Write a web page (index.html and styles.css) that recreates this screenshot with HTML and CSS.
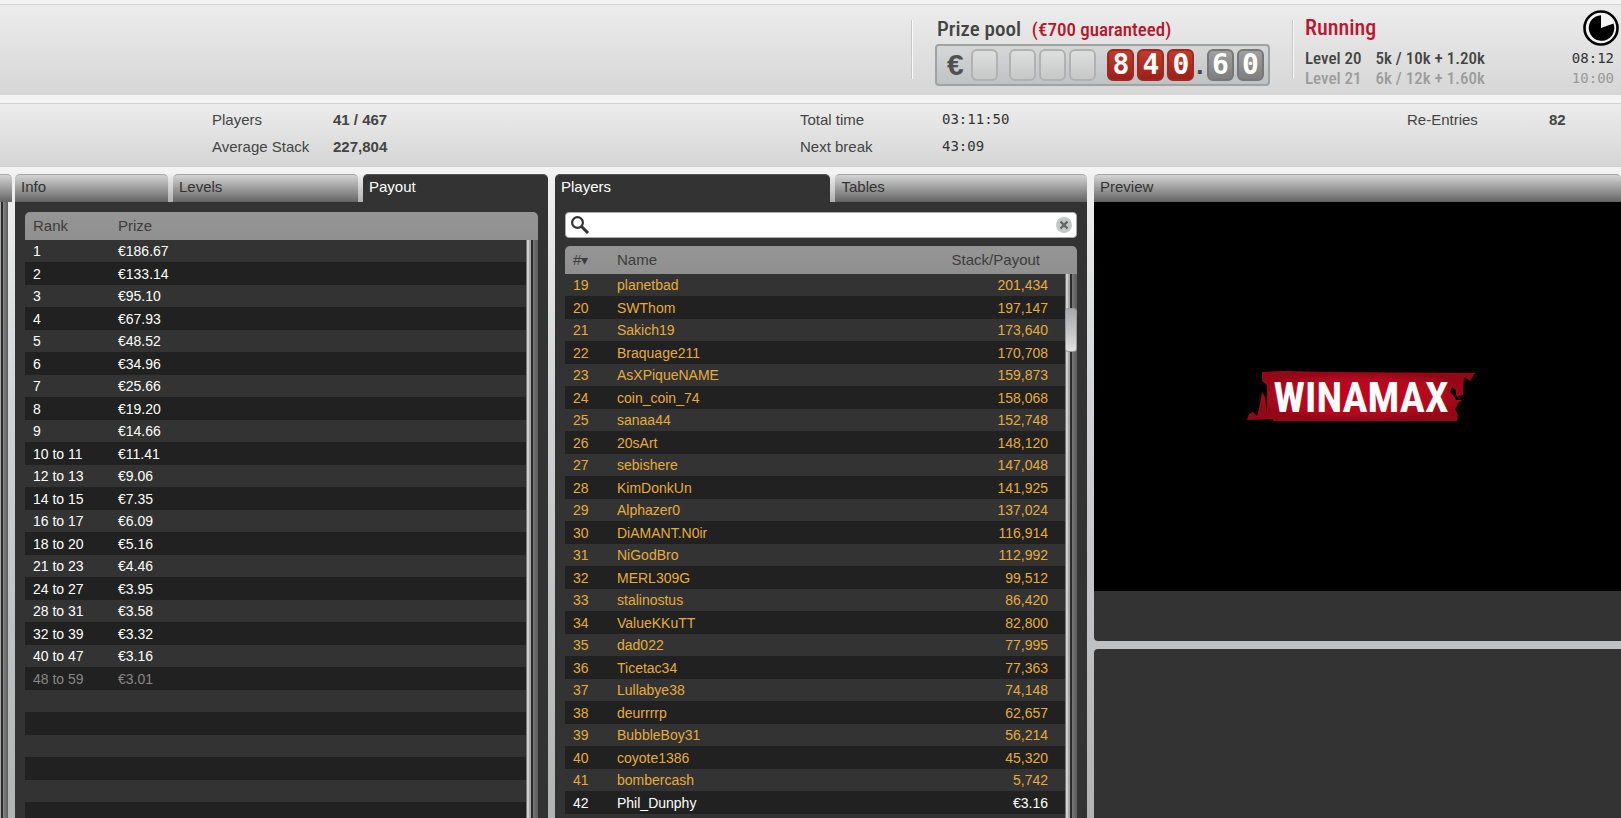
FILE: index.html
```
<!DOCTYPE html>
<html lang="en">
<head>
<meta charset="utf-8">
<title>Tournament lobby</title>
<link rel="stylesheet" href="styles.css">
</head>
<body>
<header class="top">
  <div class="top-space"></div>
  <section class="pool">
    <h1 class="pool-title">Prize pool <span class="guarantee">(€700 guaranteed)</span></h1>
    <div class="counter">
      <span class="currency">€</span>
      <span class="cells"><i class="cell"></i></span>
      <span class="cells"><i class="cell"></i><i class="cell"></i><i class="cell"></i></span>
      <span class="cells"><b class="cell red">8</b><b class="cell red">4</b><b class="cell red">0</b></span>
      <span class="dot">.</span>
      <span class="cells"><b class="cell gray">6</b><b class="cell gray">0</b></span>
    </div>
  </section>
  <section class="status">
    <div class="levels">
      <h2 class="running">Running</h2>
      <p class="level"><span>Level 20</span><span>5k / 10k + 1.20k</span></p>
      <p class="level next"><span>Level 21</span><span>6k / 12k + 1.60k</span></p>
    </div>
    <div class="clock">
      <svg class="clock-icon" viewBox="0 0 36 36" aria-hidden="true">
        <circle cx="18" cy="18" r="16.5" fill="#f4f4f4" stroke="#000" stroke-width="2.6"/>
        <path d="M18 18V5.200A12.800 12.800 0 1 0 30.500 13.500Z" fill="#000"/>
      </svg>
      <time class="lcd">08:12</time>
      <time class="lcd faded">10:00</time>
    </div>
  </section>
</header>
<section class="stats">
  <dl class="stat-group wide">
    <dt>Players</dt><dd>41 / 467</dd>
    <dt>Average Stack</dt><dd>227,804</dd>
  </dl>
  <dl class="stat-group mid">
    <dt>Total time</dt><dd class="lcd">03:11:50</dd>
    <dt>Next break</dt><dd class="lcd">43:09</dd>
  </dl>
  <dl class="stat-group mid">
    <dt>Re-Entries</dt><dd>82</dd>
  </dl>
</section>
<main class="panels">
  <aside class="edge"><div class="tab"></div><div class="edge-body"><div class="scroll"></div></div></aside>

  <section class="panel">
    <nav class="tabs info-tabs">
      <button class="tab">Info</button><button class="tab">Levels</button><button class="tab active">Payout</button>
    </nav>
    <div class="content">
      <div class="list">
        <table class="grid payout">
          <thead><tr><th class="c-rank">Rank</th><th>Prize</th></tr></thead>
          <tbody>
            <tr><td>1</td><td>€186.67</td></tr>
            <tr><td>2</td><td>€133.14</td></tr>
            <tr><td>3</td><td>€95.10</td></tr>
            <tr><td>4</td><td>€67.93</td></tr>
            <tr><td>5</td><td>€48.52</td></tr>
            <tr><td>6</td><td>€34.96</td></tr>
            <tr><td>7</td><td>€25.66</td></tr>
            <tr><td>8</td><td>€19.20</td></tr>
            <tr><td>9</td><td>€14.66</td></tr>
            <tr><td>10 to 11</td><td>€11.41</td></tr>
            <tr><td>12 to 13</td><td>€9.06</td></tr>
            <tr><td>14 to 15</td><td>€7.35</td></tr>
            <tr><td>16 to 17</td><td>€6.09</td></tr>
            <tr><td>18 to 20</td><td>€5.16</td></tr>
            <tr><td>21 to 23</td><td>€4.46</td></tr>
            <tr><td>24 to 27</td><td>€3.95</td></tr>
            <tr><td>28 to 31</td><td>€3.58</td></tr>
            <tr><td>32 to 39</td><td>€3.32</td></tr>
            <tr><td>40 to 47</td><td>€3.16</td></tr>
            <tr class="paid"><td>48 to 59</td><td>€3.01</td></tr>
            <tr><td></td><td></td></tr>
            <tr><td></td><td></td></tr>
            <tr><td></td><td></td></tr>
            <tr><td></td><td></td></tr>
            <tr><td></td><td></td></tr>
            <tr><td></td><td></td></tr>
          </tbody>
        </table>
        <div class="scroll"></div>
      </div>
    </div>
  </section>

  <section class="panel">
    <nav class="tabs player-tabs">
      <button class="tab active">Players</button><button class="tab">Tables</button>
    </nav>
    <div class="content">
      <div class="search">
        <svg class="glass" viewBox="0 0 20 20" aria-hidden="true"><circle cx="7.500" cy="7.500" r="5.400" fill="none" stroke="#333" stroke-width="2.200"/><path d="M11.500 11.500L18 18" stroke="#333" stroke-width="3"/></svg>
        <input class="search-box" type="text" aria-label="Search players">
        <button class="clear" aria-label="Clear"><svg viewBox="0 0 16 16"><circle cx="8" cy="8" r="8" fill="#c6c8c8"/><path d="M4.500 4.500L11.500 11.500M11.500 4.500L4.500 11.500" stroke="#666" stroke-width="2.400"/></svg></button>
      </div>
      <div class="list">
        <table class="grid players">
          <thead><tr><th class="c-num">#<span class="sort">▾</span></th><th>Name</th><th class="c-stack">Stack/Payout</th></tr></thead>
          <tbody>
            <tr><td>19</td><td>planetbad</td><td>201,434</td></tr>
            <tr><td>20</td><td>SWThom</td><td>197,147</td></tr>
            <tr><td>21</td><td>Sakich19</td><td>173,640</td></tr>
            <tr><td>22</td><td>Braquage211</td><td>170,708</td></tr>
            <tr><td>23</td><td>AsXPiqueNAME</td><td>159,873</td></tr>
            <tr><td>24</td><td>coin_coin_74</td><td>158,068</td></tr>
            <tr><td>25</td><td>sanaa44</td><td>152,748</td></tr>
            <tr><td>26</td><td>20sArt</td><td>148,120</td></tr>
            <tr><td>27</td><td>sebishere</td><td>147,048</td></tr>
            <tr><td>28</td><td>KimDonkUn</td><td>141,925</td></tr>
            <tr><td>29</td><td>Alphazer0</td><td>137,024</td></tr>
            <tr><td>30</td><td>DiAMANT.N0ir</td><td>116,914</td></tr>
            <tr><td>31</td><td>NiGodBro</td><td>112,992</td></tr>
            <tr><td>32</td><td>MERL309G</td><td>99,512</td></tr>
            <tr><td>33</td><td>stalinostus</td><td>86,420</td></tr>
            <tr><td>34</td><td>ValueKKuTT</td><td>82,800</td></tr>
            <tr><td>35</td><td>dad022</td><td>77,995</td></tr>
            <tr><td>36</td><td>Ticetac34</td><td>77,363</td></tr>
            <tr><td>37</td><td>Lullabye38</td><td>74,148</td></tr>
            <tr><td>38</td><td>deurrrrp</td><td>62,657</td></tr>
            <tr><td>39</td><td>BubbleBoy31</td><td>56,214</td></tr>
            <tr><td>40</td><td>coyote1386</td><td>45,320</td></tr>
            <tr><td>41</td><td>bombercash</td><td>5,742</td></tr>
            <tr class="out"><td>42</td><td>Phil_Dunphy</td><td>€3.16</td></tr>
            <tr><td></td><td></td><td></td></tr>
          </tbody>
        </table>
        <div class="scroll"><div class="thumb"></div></div>
      </div>
    </div>
  </section>

  <section class="side">
    <div class="preview panel">
      <div class="tabs"><button class="tab">Preview</button></div>
      <div class="screen">
        <svg class="logo" viewBox="0 0 230 52" role="img" aria-label="Winamax">
          <defs><radialGradient id="red"><stop offset="0" stop-color="#c8001e"/><stop offset=".7" stop-color="#b00a1e"/><stop offset="1" stop-color="#930716"/></radialGradient></defs>
          <path d="M15 1L36 0 85 1 228 2 223 10 217 6 216 24 211 25 215 30 212 31 208 38 211 44 210 50H27L25 48 0 49 2 43 6 41 10 45 12 38 15 21 18 26 20 43 20 14 15 10Z" fill="url(#red)"/>
          <path d="M205 16L209 19 209 24 214 29 209 29 206 24 203 21Z" fill="#000"/>
          <text class="logo-text" x="114" y="41" text-anchor="middle">WINAMAX</text>
        </svg>
      </div>
      <div class="under"></div>
    </div>
    <div class="blank"></div>
  </section>
</main>
</body>
</html>
```
FILE: styles.css
```
* { box-sizing: border-box; }

body {
  margin: 0;
  height: 100vh;
  overflow: hidden;
  display: flex;
  flex-direction: column;
  padding-top: 4px;
  background: #f3f3f3;
  color: #444;
  font-family: "Liberation Sans", Arial, sans-serif;
  font-size: 15px;
}

h1, h2, p, dl, dd { margin: 0; font-weight: normal; }
button { font: inherit; border: 0; cursor: pointer; }

.top, .stats {
  background: linear-gradient(#ececec, #d6d6d6);
  border-top: 1px solid #d2d2d2;
}

.top {
  display: flex;
  height: 91px;
  margin-bottom: 8px;
  font-family: "Roboto Condensed", "Liberation Sans Narrow", "Liberation Sans", sans-serif;
}
.top-space { flex: 911 1 0; }

.pool, .status {
  position: relative;
  padding-left: 24px;
}
.pool::before, .status::before {
  content: "";
  position: absolute;
  left: 0;
  top: 15px;
  width: 2px;
  height: 59px;
  background: linear-gradient(90deg, #c6c6c6 50%, #fafafa 50%);
}
.pool { width: 381px; padding-top: 10px; }
.status {
  flex: 314 1 0;
  display: flex;
  justify-content: space-between;
  padding: 5px 2px 0 13px;
}

.pool-title {
  font-size: 21px;
  font-weight: 500;
  line-height: 28px;
  padding-left: 2px;
  white-space: nowrap;
}
.guarantee { color: #b9142a; font-size: 19px; margin-left: 6px; }

.counter {
  width: 335px;
  height: 42px;
  display: flex;
  align-items: center;
  padding: 0 4px 0 10px;
  border: 2px solid #a0a3a4;
  border-radius: 4px;
  background: linear-gradient(#d6d8d8, #bfc2c3);
}
.currency { width: 25px; font: bold 30px/32px "Liberation Sans", sans-serif; color: #505050; }
.cells { display: flex; gap: 3px; margin-right: 11px; }
.cells:last-child { margin-right: 0; }
.cell {
  width: 27px;
  height: 32px;
  border: 2px solid #b0b2b2;
  border-radius: 6px;
  background: linear-gradient(#dedede, #c6c8c8);
  color: #fff;
  font: bold 28px/28px "DejaVu Sans Mono", monospace;
  display: flex;
  justify-content: center;
}
.red { background: linear-gradient(#c23a2a, #9c2019); border-color: #9d2a20; }
.gray { background: linear-gradient(#a0a0a0, #7e7e7e); border-color: #777; }
.dot { width: 11px; margin-left: -9px; font: bold 26px/32px "Liberation Sans", sans-serif; }

.running {
  color: #bf1530;
  font-size: 22px;
  font-weight: 500;
  line-height: 36px;
  padding-bottom: 2px;
}
.level {
  display: flex;
  gap: 14px;
  font-size: 17px;
  font-weight: 500;
  line-height: 20px;
  white-space: nowrap;
}
.next { color: #9c9c9c; }

.lcd { font: 14px/20px "DejaVu Sans Mono", monospace; color: #333; }
.faded { color: #999; }
.clock {
  display: flex;
  flex-direction: column;
  align-items: flex-end;
}
.clock-icon { width: 36px; height: 36px; margin-bottom: 2px; }
.clock .lcd { padding-right: 5px; }

.stats {
  height: 64px;
  margin-bottom: 7px;
  padding: 2px 0 0 212px;
  display: grid;
  grid-template-columns: 588fr 607fr 214fr;
  border-bottom: 1px solid #cfcfcf;
}
.stat-group {
  display: grid;
  grid-template-columns: 121px 1fr;
  grid-auto-rows: 27px;
  line-height: 27px;
}
.mid { grid-template-columns: 142px 1fr; }
.stat-group dd { font-weight: bold; }
.stat-group .lcd { font-weight: normal; line-height: 27px; }

.panels {
  flex: 1;
  min-height: 0;
  display: grid;
  grid-template-columns: 8px 533fr 532fr 527fr;
  grid-template-rows: minmax(0, 1fr);
  gap: 7px;
  background: linear-gradient(#f0f0f0, #d2d3d4 35%, #b2b3b3);
}

.panel, .edge {
  display: flex;
  flex-direction: column;
  min-height: 0;
  min-width: 0;
}
.edge-body {
  flex: 1;
  display: flex;
}
.edge-body .scroll { width: 8px; }

.tabs {
  display: grid;
  gap: 5px;
  height: 28px;
  background: linear-gradient(#f0f0f0, #b0b0b0);
  border-radius: 5px 5px 0 0;
}
.info-tabs { grid-template-columns: 153fr 185fr 185fr; }
.player-tabs { grid-template-columns: 276fr 252fr; }
.tab {
  height: 28px;
  padding: 0 6px 5px;
  text-align: left;
  color: #333;
  background: linear-gradient(#d4d4d4, #646464);
  border-radius: 5px 5px 0 0;
  border-top: 1px solid #a6a6a6;
}
.tabs .active {
  background: #333;
  color: #fff;
  border-top-color: #555;
}
.edge .tab { border-radius: 0 5px 0 0; }

.content {
  flex: 1;
  min-height: 0;
  background: #333;
  padding: 10px 10px 0;
  display: flex;
  flex-direction: column;
  gap: 8px;
}

.search {
  display: flex;
  align-items: center;
  height: 26px;
  padding: 0 4px;
  background: #fff;
  border: 1px solid #aaa;
  border-radius: 4px;
}
.glass { width: 20px; height: 20px; }
.search-box {
  flex: 1;
  min-width: 0;
  border: 0;
  outline: 0;
  background: transparent;
  font: inherit;
}
.clear { width: 16px; height: 16px; padding: 0; background: none; }
.clear svg { display: block; }

.list {
  flex: 1;
  min-height: 0;
  overflow: hidden;
  display: grid;
  grid-template-columns: minmax(0, 1fr) 12px;
  background: linear-gradient(#959595, #909090) top / 100% 28px no-repeat;
  border-radius: 5px 5px 0 0;
}
.grid {
  width: 100%;
  align-self: start;
  border-collapse: collapse;
  table-layout: fixed;
}
.grid th {
  height: 28px;
  padding: 0 0 2px 8px;
  font-weight: normal;
  color: #3c3c3c;
  text-align: left;
}
.grid td {
  height: 22px;
  padding: 0 0 0 8px;
  font-size: 14px;
  line-height: 22px;
  white-space: nowrap;
}
.grid tbody tr { background: #333; }
.grid tbody tr:nth-child(even) { background: #212121; }
.grid tbody tr:nth-child(even) td { height: 23px; }
.payout td { color: #fff; }
.payout .paid td { color: #888; }
.c-rank { width: 85px; }
.c-num { width: 44px; }
.c-stack { width: 130px; }
.players td { color: #e5ac3c; }
.players .out td { color: #fff; }
.players td:last-child { text-align: right; padding-right: 17px; }
.players th:last-child { text-align: right; padding-right: 25px; }
.sort { font-size: 14px; }

.scroll {
  margin-top: 28px;
  background: linear-gradient(90deg, #777 0 1px, #d0d0d0 1px 3px, #a8a8a8 3px 5px, #2c2c2c 5px 7px, #777 7px, #5c5c5c);
}
.edge .scroll {
  margin-top: 0;
  background: linear-gradient(90deg, #a8a8a8 0 1px, #2c2c2c 1px 3px, #888 3px, #5c5c5c);
}
.thumb {
  margin-top: 34px;
  height: 44px;
  border-radius: 3px;
  background: linear-gradient(#a8abad, #c6c8ca 60%, #e0e0e0);
  border: 1px solid #999;
}

.side {
  display: flex;
  flex-direction: column;
  gap: 8px;
  min-width: 0;
}
.preview { flex: 467 1 0; }
.screen {
  flex: 389 1 0;
  min-height: 0;
  padding-left: 8px;
  background: #000;
  display: flex;
  align-items: center;
  justify-content: center;
}
.logo { width: 230px; height: 52px; }
.logo-text {
  fill: #fff;
  font: bold 42px "Roboto Condensed", "Liberation Sans Narrow", "Liberation Sans", sans-serif;
}
.under {
  flex: 50 1 0;
  background: #333;
  border-radius: 0 0 0 4px;
}
.blank {
  flex: 169 1 0;
  background: #333;
  border-radius: 4px 0 0 0;
}
```
